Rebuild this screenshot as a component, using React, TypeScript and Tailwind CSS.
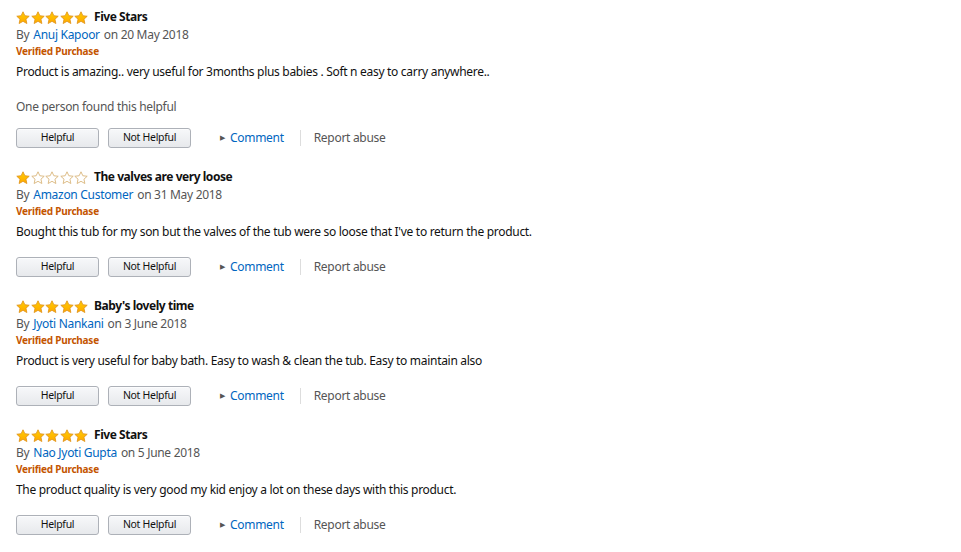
import React from "react";

type Review = {
  stars: number;
  title: string;
  author: string;
  date: string;
  body: string;
  helpful?: string;
};

const reviews: Review[] = [
  {
    stars: 5,
    title: "Five Stars",
    author: "Anuj Kapoor",
    date: "on 20 May 2018",
    body: "Product is amazing.. very useful for 3months plus babies . Soft n easy to carry anywhere..",
    helpful: "One person found this helpful",
  },
  {
    stars: 1,
    title: "The valves are very loose",
    author: "Amazon Customer",
    date: "on 31 May 2018",
    body: "Bought this tub for my son but the valves of the tub were so loose that I've to return the product.",
  },
  {
    stars: 5,
    title: "Baby's lovely time",
    author: "Jyoti Nankani",
    date: "on 3 June 2018",
    body: "Product is very useful for baby bath. Easy to wash & clean the tub. Easy to maintain also",
  },
  {
    stars: 5,
    title: "Five Stars",
    author: "Nao Jyoti Gupta",
    date: "on 5 June 2018",
    body: "The product quality is very good my kid enjoy a lot on these days with this product.",
  },
];

const STAR = "M7 0.8 L8.85 4.75 L13.2 5.25 L9.95 8.2 L10.85 12.5 L7 10.3 L3.15 12.5 L4.05 8.2 L0.8 5.25 L5.15 4.75 Z";

function Star({ filled }: { filled: boolean }) {
  return (
    <svg width="14" height="13" viewBox="0 0 14 13">
      <defs>
        <linearGradient id="starFill" x1="0" y1="0" x2="0" y2="1">
          <stop offset="0" stopColor="#ffce00" />
          <stop offset="1" stopColor="#ffa700" />
        </linearGradient>
      </defs>
      {filled ? (
        <path d={STAR} fill="url(#starFill)" stroke="#e2971f" strokeWidth="0.9" strokeLinejoin="round" />
      ) : (
        <path d={STAR} fill="#fff" stroke="#d9b67a" strokeWidth="0.9" strokeLinejoin="round" />
      )}
    </svg>
  );
}

function Stars({ count }: { count: number }) {
  return (
    <div className="flex items-center gap-[0.5px]">
      {[0, 1, 2, 3, 4].map((i) => (
        <Star key={i} filled={i < count} />
      ))}
    </div>
  );
}

function VoteButton({ label }: { label: string }) {
  return (
    <button className="flex h-[20px] w-[83px] items-center justify-center rounded-[3px] border border-[#adb1b8] bg-gradient-to-b from-[#f7f8fa] to-[#e7e9ec] text-[10.5px] tracking-[-0.3px] text-[#111] shadow-[0_1px_0_rgba(255,255,255,0.6)_inset]">
      {label}
    </button>
  );
}

function ReviewItem({ review, first }: { review: Review; first: boolean }) {
  return (
    <div className={first ? "" : "mt-[20px]"}>
      <div className="flex h-[18px] items-center">
        <Stars count={review.stars} />
        <span className="ml-[6px] text-[12px] font-bold tracking-[-0.45px] text-[#111]">{review.title}</span>
      </div>
      <div className="flex h-[17px] items-center text-[12px] tracking-[-0.3px] text-[#555]">
        <span>By</span>
        <a className="ml-[4px] text-[#0066c0]">{review.author}</a>
        <span className="ml-[4px]">{review.date}</span>
      </div>
      <div className="flex h-[17px] items-center text-[10px] font-bold tracking-[-0.25px] text-[#c45500]">
        Verified Purchase
      </div>
      <p className="mt-[3px] flex h-[18px] items-center text-[12px] tracking-[-0.3px] text-[#111]">{review.body}</p>
      {review.helpful && (
        <p className="mt-[17px] flex h-[18px] items-center text-[12px] tracking-[-0.3px] text-[#555]">
          {review.helpful}
        </p>
      )}
      <div className={`flex items-center ${review.helpful ? "mt-[12px]" : "mt-[16px]"}`}>
        <VoteButton label="Helpful" />
        <div className="ml-[9px]">
          <VoteButton label="Not Helpful" />
        </div>
        <span className="ml-[29px] text-[7px] text-[#555]">▶</span>
        <a className="ml-[5px] text-[12px] tracking-[-0.3px] text-[#0066c0]">Comment</a>
        <span className="ml-[16px] h-[16px] w-px bg-[#ddd]" />
        <a className="ml-[13px] text-[12px] tracking-[-0.3px] text-[#555]">Report abuse</a>
      </div>
    </div>
  );
}

export default function App() {
  return (
    <div
      className="h-[552px] w-[961px] bg-white px-[16px] pt-[8px]"
      style={{ fontFamily: '"Noto Sans", Arial, sans-serif' }}
    >
      {reviews.map((r, i) => (
        <ReviewItem key={i} review={r} first={i === 0} />
      ))}
    </div>
  );
}
